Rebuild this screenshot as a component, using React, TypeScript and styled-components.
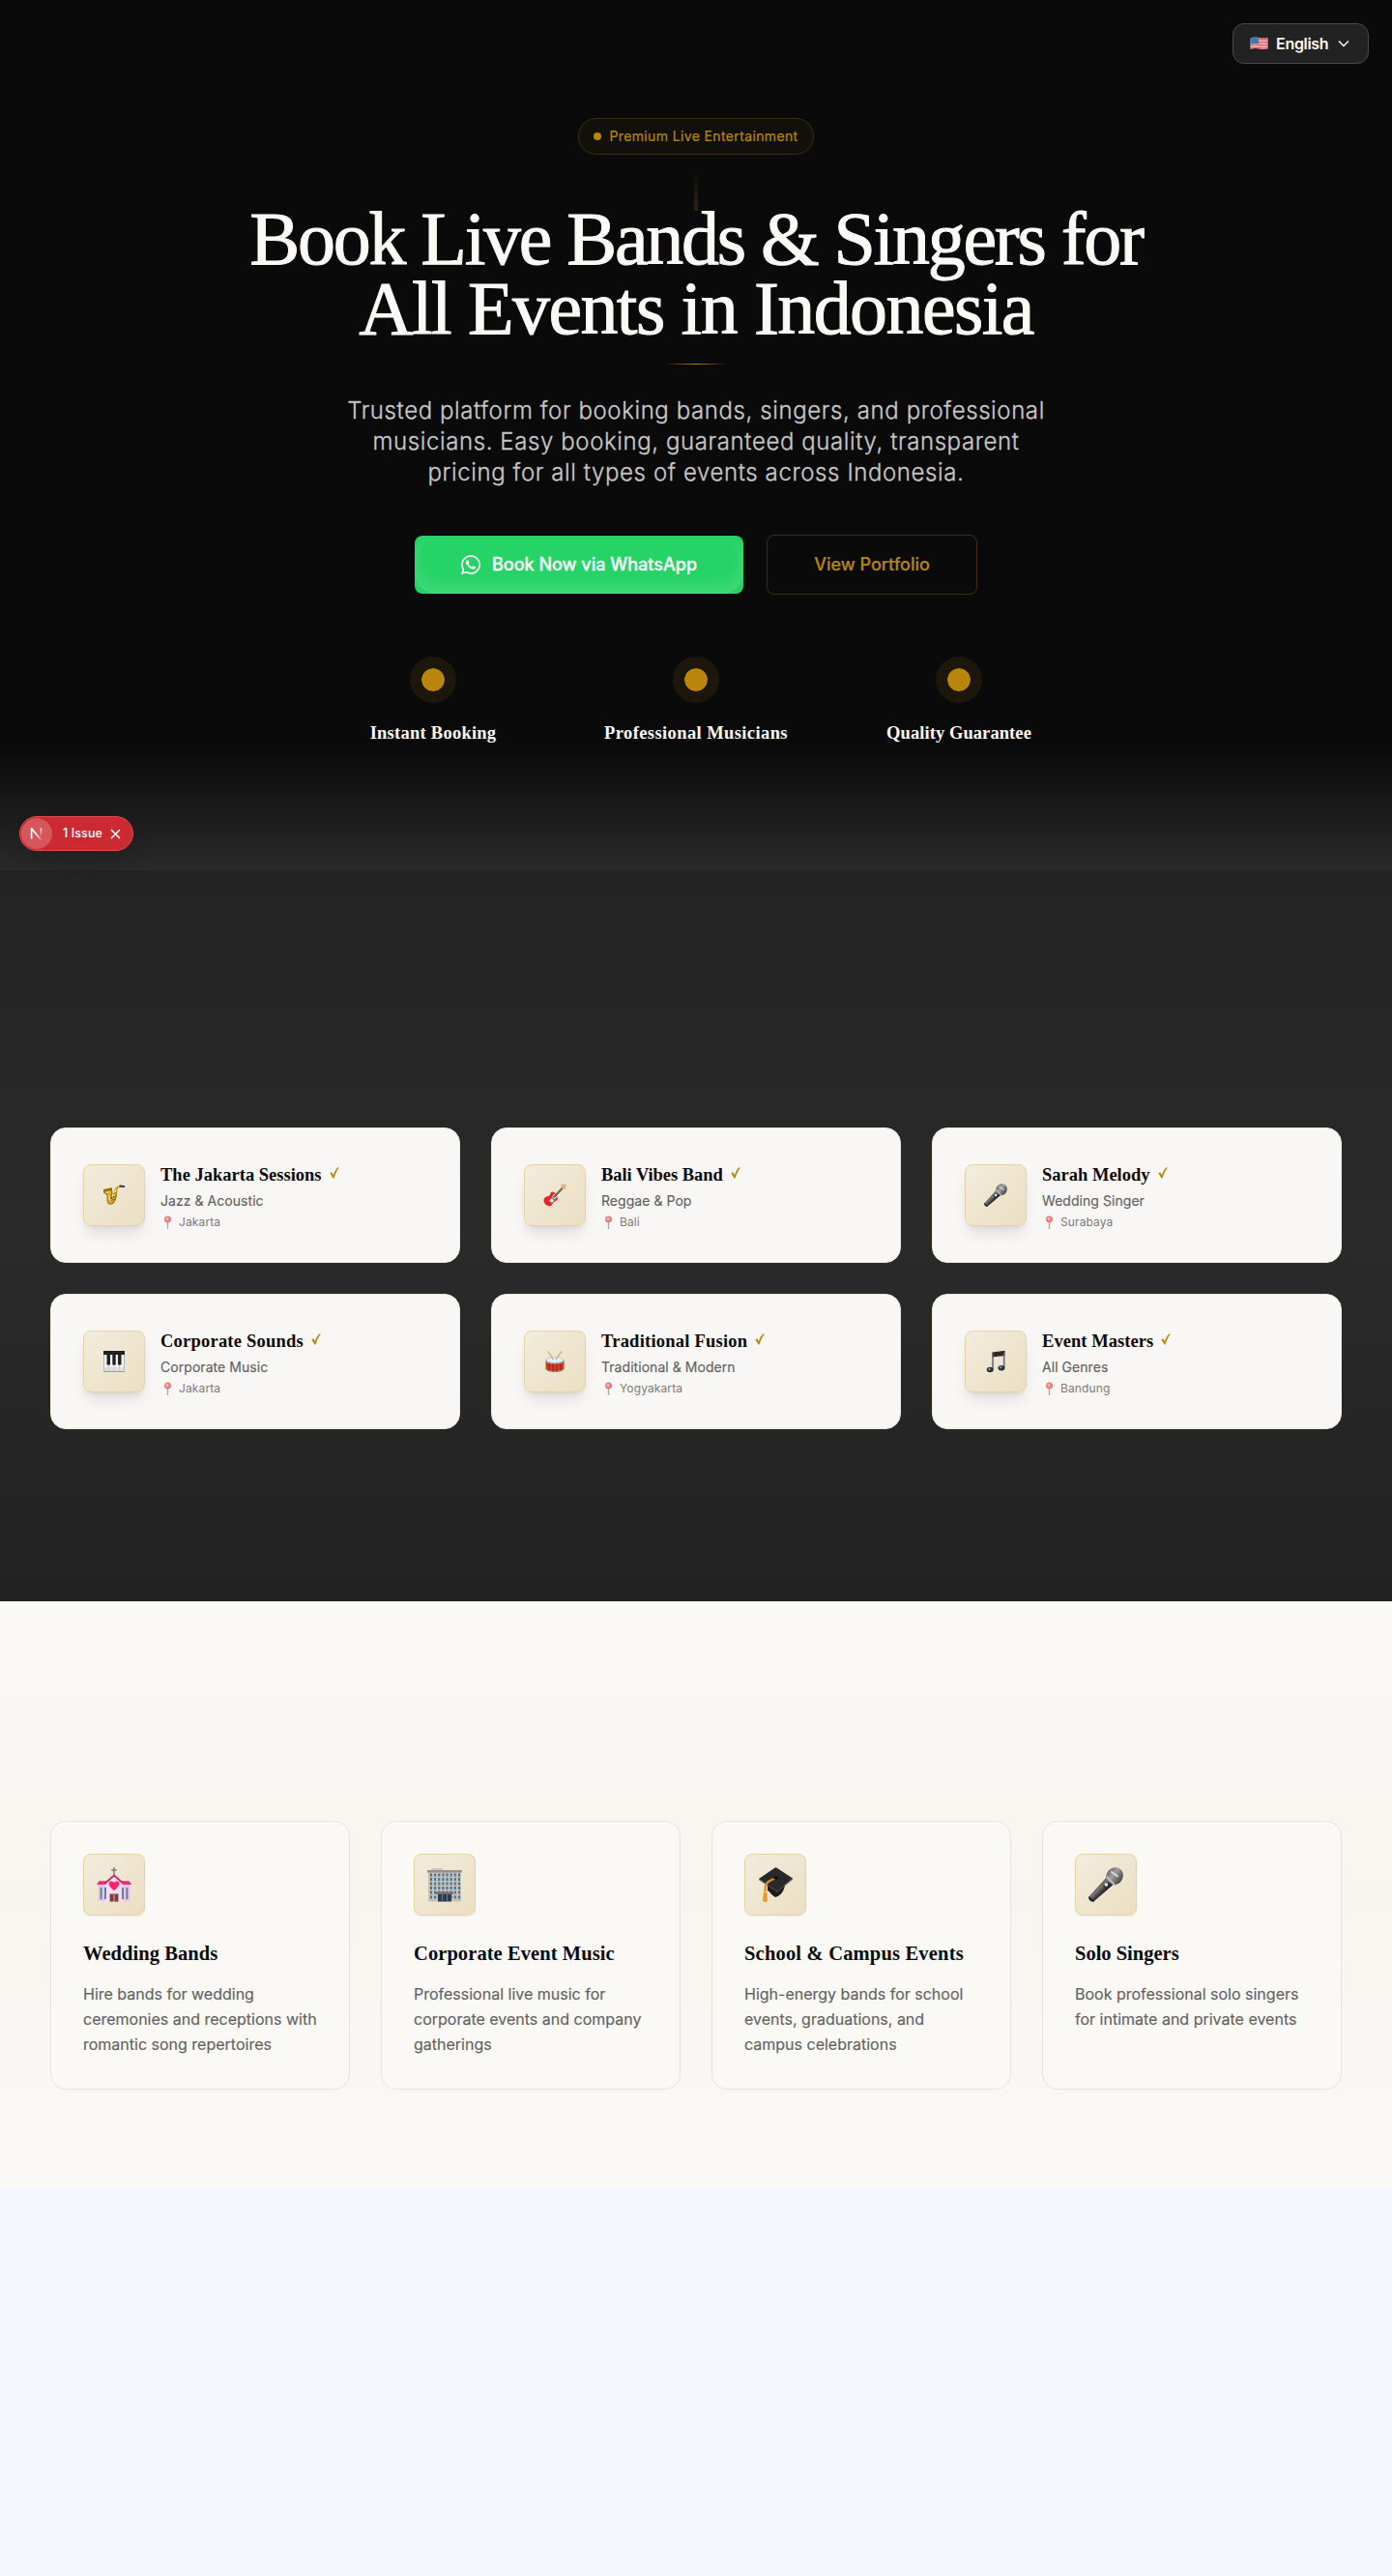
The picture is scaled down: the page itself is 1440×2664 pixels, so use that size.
import React from "react";
import styled, { createGlobalStyle } from "styled-components";

const GOLD = "#b8860b";
const SANS = '"Inter", "Liberation Sans", sans-serif';
const SERIF = '"Liberation Serif", serif';

const GlobalStyle = createGlobalStyle`
  * { box-sizing: border-box; }
  body { margin: 0; background: #f6f6ff; font-family: ${SANS}; }
  h1, h2, h3, p { margin: 0; }
`;

const Page = styled.div`
  position: relative;
  min-height: 2664px;
  background: #f6f6ff;
`;

/* ---------- hero ---------- */

const Hero = styled.header`
  position: relative;
  height: 900px;
  padding-top: 122px;
  background: #0a0a0a;
  display: flex;
  flex-direction: column;
  align-items: center;
  text-align: center;
`;

const HeroFade = styled.div`
  position: absolute;
  left: 0;
  right: 0;
  bottom: 0;
  height: 128px;
  background: linear-gradient(to bottom, rgba(42, 42, 42, 0), #2a2a2a);
`;

const HeroBeam = styled.div`
  position: absolute;
  left: 718px;
  top: 176px;
  width: 4px;
  height: 42px;
  background: linear-gradient(to bottom, rgba(184, 134, 11, 0), rgba(184, 134, 11, 0.22));
`;

const LanguageButton = styled.button`
  position: absolute;
  top: 24px;
  right: 24px;
  width: 141px;
  height: 42px;
  padding: 0 18px;
  display: flex;
  align-items: center;
  border: 1px solid #484848;
  border-radius: 12px;
  background: #222222;
  color: #faf9f6;
  font: 600 16px/24px ${SANS};
  letter-spacing: -0.3px;
  svg:first-child { margin-right: 8px; margin-left: -1px; }
  svg:last-child { margin-left: auto; margin-right: 1px; }
`;

const Pill = styled.div`
  width: 244px;
  height: 38px;
  display: flex;
  align-items: center;
  justify-content: center;
  gap: 8px;
  border: 1px solid rgba(184, 134, 11, 0.25);
  border-radius: 19px;
  background: rgba(184, 134, 11, 0.05);
  color: ${GOLD};
  font: 400 14px/20px ${SANS};
  letter-spacing: 0.37px;
  -webkit-text-stroke: 0.2px ${GOLD};
`;

const PillDot = styled.span`
  width: 8px;
  height: 8px;
  border-radius: 50%;
  background: ${GOLD};
`;

const Headline = styled.h1`
  position: relative;
  margin-top: 51px;
  color: #faf9f6;
  font: 400 78px/72px ${SERIF};
  -webkit-text-stroke: 1px #faf9f6;
`;

const HeadlineLine = styled.span<{ $tracking: number }>`
  display: block;
  white-space: nowrap;
  letter-spacing: ${(p) => p.$tracking}px;
`;

const Rule = styled.div`
  width: 64px;
  height: 1px;
  margin-top: 21px;
  background: linear-gradient(to right, transparent, ${GOLD}, transparent);
`;

const Lead = styled.p`
  margin-top: 32px;
  width: 760px;
  color: #c9c8c5;
  font: 300 24px/32px ${SANS};
  letter-spacing: 0.6px;
  -webkit-text-stroke: 0.3px #c9c8c5;
`;

const Actions = styled.div`
  margin-top: 48px;
  display: flex;
  align-items: center;
  gap: 24px;
`;

const PrimaryButton = styled.button`
  position: relative;
  width: 340px;
  height: 60px;
  display: flex;
  align-items: center;
  justify-content: center;
  gap: 12px;
  border: 0;
  border-radius: 8px;
  background: #25d366;
  color: #ffffff;
  font: 500 18px/28px ${SANS};
  -webkit-text-stroke: 0.3px #ffffff;
  &::after {
    content: "";
    position: absolute;
    inset: 0;
    border-radius: 22px;
    box-shadow: inset 0 -8px 16px rgba(255, 255, 255, 0.15);
  }
`;

const OutlineButton = styled.button`
  width: 218px;
  height: 62px;
  border: 1px solid rgba(184, 134, 11, 0.3);
  border-radius: 8px;
  background: transparent;
  color: ${GOLD};
  font: 500 18px/28px ${SANS};
  -webkit-text-stroke: 0.2px ${GOLD};
`;

const Features = styled.div`
  margin-top: 64px;
  display: grid;
  grid-template-columns: repeat(3, 240px);
  gap: 32px;
`;

const Feature = styled.div`
  position: relative;
  z-index: 1;
  display: flex;
  flex-direction: column;
  align-items: center;
`;

const FeatureDot = styled.div`
  width: 48px;
  height: 48px;
  border: 12px solid #1c160b;
  border-radius: 50%;
  background: ${GOLD};
  background-clip: padding-box;
`;

const FeatureTitle = styled.h3<{ $tracking: number }>`
  margin-top: 16px;
  padding-top: 2px;
  white-space: nowrap;
  color: #faf9f6;
  font: 700 18.5px/26px ${SERIF};
  letter-spacing: ${(p) => p.$tracking}px;
`;

const IssueBadge = styled.div`
  position: absolute;
  left: 20px;
  top: 844px;
  z-index: 2;
  width: 118px;
  height: 36px;
  padding: 0 12px 0 1px;
  display: flex;
  align-items: center;
  border: 1px solid #e5484d;
  border-radius: 18px;
  background: #ca2a30;
  box-shadow: 0 16px 32px -8px rgba(0, 0, 0, 0.24);
  color: #ffffff;
  font: 500 12.5px/16px ${SANS};
  letter-spacing: 0.1px;
  > svg { margin-left: auto; }
`;

const IssueMark = styled.span`
  width: 32px;
  height: 32px;
  margin-right: 11px;
  display: flex;
  align-items: center;
  justify-content: center;
  border-radius: 50%;
  background: #d6565b;
`;

/* ---------- artists ---------- */

const Artists = styled.section`
  height: 756px;
  padding: 266px 52px 0;
  background: linear-gradient(to bottom, #242424, #2a2a2a 50%, #222222);
`;

const ArtistGrid = styled.div`
  display: grid;
  grid-template-columns: repeat(3, 1fr);
  gap: 32px;
`;

const ArtistCard = styled.article`
  height: 140px;
  padding: 0 33px;
  display: flex;
  align-items: center;
  gap: 16px;
  border: 1px solid #efe9dc;
  border-radius: 16px;
  background: #f9f7f5;
`;

const IconTile = styled.div<{ $raised?: boolean }>`
  flex: none;
  width: 64px;
  height: 64px;
  display: flex;
  align-items: center;
  justify-content: center;
  border: 1px solid #e6d3a3;
  border-radius: 8px;
  background: linear-gradient(135deg, #f3ecde, #ebdfc2);
  box-shadow: ${(p) =>
    p.$raised
      ? "0 10px 15px -3px rgba(0,0,0,0.1), 0 4px 6px -4px rgba(0,0,0,0.1)"
      : "0 1px 2px rgba(0,0,0,0.06)"};
`;

const ArtistName = styled.h3<{ $tracking: number }>`
  display: flex;
  align-items: center;
  gap: 8px;
  padding-top: 2px;
  margin-bottom: 4px;
  white-space: nowrap;
  color: #0a0a0a;
  font: 700 18.5px/26px ${SERIF};
  letter-spacing: ${(p) => p.$tracking}px;
  svg { margin-top: -4px; }
`;

const Genre = styled.p`
  color: #636261;
  font: 400 14px/20px ${SANS};
  letter-spacing: 0.05px;
  -webkit-text-stroke: 0.15px #636261;
`;

const Place = styled.p`
  margin-top: 4px;
  padding-left: 3px;
  display: flex;
  align-items: center;
  gap: 7px;
  color: #7b7a79;
  font: 400 12px/16px ${SANS};
  letter-spacing: 0.12px;
`;

/* ---------- services ---------- */

const Services = styled.section`
  height: 606px;
  padding: 227px 52px 0;
  background: linear-gradient(to bottom, #faf9f5, #f8f5f0 50%, #faf9f5);
`;

const ServiceGrid = styled.div`
  display: grid;
  grid-template-columns: repeat(4, 1fr);
  gap: 32px;
`;

const ServiceCard = styled.article`
  height: 278px;
  padding: 33px;
  border: 1px solid #e7e4dc;
  border-radius: 16px;
  background: #faf9f6;
`;

const ServiceTitle = styled.h3<{ $tracking: number }>`
  margin-top: 24px;
  padding-top: 2px;
  white-space: nowrap;
  color: #0a0a0a;
  font: 700 20.5px/26px ${SERIF};
  letter-spacing: ${(p) => p.$tracking}px;
`;

const ServiceText = styled.p`
  margin-top: 16px;
  color: #636261;
  font: 400 16px/26px ${SANS};
  -webkit-text-stroke: 0.15px #636261;
  span { display: block; white-space: nowrap; }
`;

/* ---------- drawings ---------- */

const Flag = () => (
  <svg width="19" height="14" viewBox="0 0 19 14">
    <path d="M0.5 1.5Q5 0 9.5 1T18.500 1V12.200Q14 13.500 9.500 12.500T0.500 12.800Z" fill="#f0b9bd" />
    <path d="M.5 3Q5 1.700 9.500 2.500T18.500 2.500M.5 6Q5 4.700 9.500 5.500T18.500 5.500M.5 9Q5 7.700 9.500 8.500T18.500 8.500M.5 12Q5 10.700 9.500 11.500T18.500 11.500" stroke="#e2606d" strokeWidth="1.300" fill="none" />
    <path d="M.5 1.500Q5 0 9 1V7.300Q5 6.500 .5 7.800Z" fill="#3f78b5" />
  </svg>
);

const Chevron = () => (
  <svg width="12" height="12" viewBox="0 0 12 12" fill="none" stroke="#faf9f6" strokeWidth="1.5">
    <path d="M1 3.500 6 8.500 11 3.500" />
  </svg>
);

const WhatsApp = () => (
  <svg width="20" height="20" viewBox="0 0 24 24" fill="#ffffff">
    <path d="M17.472 14.382c-.297-.149-1.758-.867-2.030-.967-.273-.099-.471-.148-.670.150-.197.297-.767.966-.940 1.164-.173.199-.347.223-.644.075-.297-.150-1.255-.463-2.390-1.475-.883-.788-1.480-1.761-1.653-2.059-.173-.297-.018-.458.130-.606.134-.133.298-.347.446-.520.149-.174.198-.298.298-.497.099-.198.050-.371-.025-.520-.075-.149-.669-1.612-.916-2.207-.242-.579-.487-.500-.669-.510-.173-.008-.371-.010-.570-.010-.198 0-.520.074-.792.372-.272.297-1.040 1.016-1.040 2.479 0 1.462 1.065 2.875 1.213 3.074.149.198 2.096 3.200 5.077 4.487.709.306 1.262.489 1.694.625.712.227 1.360.195 1.871.118.571-.085 1.758-.719 2.006-1.413.248-.694.248-1.289.173-1.413-.074-.124-.272-.198-.570-.347m-5.421 7.403h-.004a9.870 9.870 0 01-5.031-1.378l-.361-.214-3.741.982.998-3.648-.235-.374a9.860 9.860 0 01-1.510-5.260c.001-5.450 4.436-9.884 9.888-9.884 2.640 0 5.122 1.030 6.988 2.898a9.825 9.825 0 012.893 6.994c-.003 5.450-4.437 9.884-9.885 9.884m8.413-18.297A11.815 11.815 0 0012.050 0C5.495 0 .160 5.335.157 11.892c0 2.096.547 4.142 1.588 5.945L.057 24l6.305-1.654a11.882 11.882 0 005.683 1.448h.005c6.554 0 11.890-5.335 11.893-11.893a11.821 11.821 0 00-3.480-8.413Z" />
  </svg>
);

const NextMark = () => (
  <svg width="16" height="16" viewBox="0 0 16 16" fill="none">
    <defs>
      <linearGradient id="nDiag" x1="7" y1="8" x2="13" y2="15" gradientUnits="userSpaceOnUse">
        <stop stopColor="#fff" />
        <stop offset="1" stopColor="#fff" stopOpacity="0.1" />
      </linearGradient>
      <linearGradient id="nStem" x1="0" y1="2" x2="0" y2="11" gradientUnits="userSpaceOnUse">
        <stop stopColor="#fff" />
        <stop offset="1" stopColor="#fff" stopOpacity="0" />
      </linearGradient>
    </defs>
    <path d="M2.600 13.500V2.500" stroke="#fff" strokeWidth="1.600" />
    <path d="M2.300 2.500 12.800 15" stroke="url(#nDiag)" strokeWidth="1.700" />
    <rect x="11.600" y="2.500" width="1.600" height="8.500" fill="url(#nStem)" />
  </svg>
);

const CloseMark = () => (
  <svg width="11" height="11" viewBox="0 0 11 11" stroke="#fff" strokeWidth="1.500">
    <path d="M1 1 10 10M10 1 1 10" />
  </svg>
);

const Check = () => (
  <svg width="10" height="12" viewBox="0 0 10 12">
    <path d="M.3 6.300 2.300 5.200 3.900 8.200C5 4.600 6.900 1.300 8.600.3L9.800.4C7.600 3.300 5.700 7.300 4.500 11.600H3.500Z" fill={GOLD} />
  </svg>
);

const Pin = () => (
  <svg width="9" height="15" viewBox="0 0 9 15">
    <path d="M4.500 7V14" stroke="#aaa6a6" strokeWidth="1.300" />
    <circle cx="4.500" cy="4" r="3.500" fill="#e57f80" />
    <circle cx="4" cy="3.500" r="1.500" fill="#f6b8b8" />
  </svg>
);

const Sax = () => (
  <svg width="24" height="24" viewBox="0 0 24 24" fill="none">
    <path d="M16.200 3.500C14.800 5 15.600 9 14.700 13 13.800 17.500 12 21.600 8.500 21.600 4.800 21.600 4.300 18 4.800 14.500L4.300 11.500 1.200 9.500 1 6.200 9.800 4.300 10.500 9.800 9.300 14 10.800 14.500C12 11.500 12.200 6.500 13.800 4Z" fill="#7a560c" />
    <path d="M16.800 3.200C14.600 4.500 15.200 9 14 13 12.800 17.500 11.500 20.800 8.500 20.800 5.600 20.800 5.200 18 5.600 14.500L5 11 1.500 8.500 9.300 6.500 9.500 10 8.300 14.500 9.200 16.500C11.500 14 11.700 6 14.200 3.800Z" fill="#dba91f" />
    <ellipse cx="5.400" cy="6.600" rx="4.500" ry="1.500" transform="rotate(-12 5.400 6.600)" fill="#94700f" />
    <path d="M13.800 6.500 12.200 13M6.800 12 7 17.500M3.500 9.200 7.500 8.500" stroke="#ffe67d" strokeWidth="1.100" />
    <path d="M14.500 9 11.500 11M13.800 12.500 10.500 14.500M12.800 16 9.500 17.500" stroke="#6d4c0a" strokeWidth=".9" />
    <path d="M15.300 4 18.500 2.600" stroke="#caa02a" strokeWidth="1.700" />
    <path d="M17.600 1.600 23 2.300V3.900L17.600 3.800Z" fill="#30343a" />
  </svg>
);

const Guitar = () => (
  <svg width="24" height="24" viewBox="0 0 24 24" fill="none">
    <path d="M11.500 9C8.800 7.500 7.600 9 7 11.500 6 13.500 2 13 .7 16 -.3 19.500 3 23.500 7 23.300 9.300 23 9.500 19.500 11.500 18.500 14 17.800 15.300 16.500 14.700 14.500Z" fill="#ec2026" />
    <path d="M11 10.500 8.500 15 5.500 18 8.500 20.500 11.500 16.500 14 14Z" fill="#eceff2" />
    <path d="M6 17.500 9 20.500M8.500 14.500 12 17.500" stroke="#777" strokeWidth="1.200" />
    <path d="M10.500 14.500 20 4.500" stroke="#5b4741" strokeWidth="2" />
    <path d="M10.500 14.500 20 4.500" stroke="#b8b5b1" strokeWidth=".5" />
    <path d="M18.300 3.600 21.200 .5 24 1.200 22.500 4.500 20.200 5.500Z" fill="#eaad79" />
    <path d="M18.500 2 20 .7M22 5.500 23.500 4" stroke="#9b806b" strokeWidth=".8" />
  </svg>
);

const Mic = ({ size }: { size: number }) => (
  <svg width={size} height={size} viewBox="0 0 24 24" fill="none">
    <defs>
      <linearGradient id="micBody" x1="7" y1="11" x2="12" y2="16" gradientUnits="userSpaceOnUse">
        <stop stopColor="#444" />
        <stop offset=".4" stopColor="#777" />
        <stop offset="1" stopColor="#1c1c1c" />
      </linearGradient>
      <linearGradient id="micHead" x1="14" y1="2" x2="23" y2="9" gradientUnits="userSpaceOnUse">
        <stop stopColor="#6c6c6c" />
        <stop offset=".4" stopColor="#a0a0a0" />
        <stop offset="1" stopColor="#444" />
      </linearGradient>
    </defs>
    <path d="M12 7.500 16.800 12.200 4 23.300Q2.500 24.300 1 22.800T.600 20Z" fill="url(#micBody)" />
    <path d="M.5 20 4 23.500Q2.500 24.300 1 22.800T.5 20Z" fill="#222" />
    <path d="M12 7.500C12 3 15.500 0 19 .2 22.500.500 24.300 3.500 23.800 6.500 23 10.500 20 12.500 16.500 12.200Z" fill="url(#micHead)" />
    <path d="M12.800 6.700 18 12" stroke="#c5c5c5" strokeWidth="1" />
    <path d="M15.500 3 20.500 6.500" stroke="#d7d7d7" strokeWidth="1.200" />
    <path d="M10 12.500 12.500 10.300 14 12 11.500 14.500Z" fill="#303030" />
    <circle cx="12.200" cy="12" r="1.200" fill="#eee" />
  </svg>
);

const Piano = () => (
  <svg width="22" height="22" viewBox="0 0 22 22">
    <rect width="22" height="22" rx=".6" fill="#9b9b9b" />
    <path d="M.7 3H5.200V21H.700ZM5.800 3H10.700V21H5.800ZM11.300 3H16.200V21H11.300ZM16.800 3H21.300V21H16.800Z" fill="#f3f3f3" />
    <path d="M.7 17H21.300V21H.700Z" fill="#d4d4d4" opacity=".7" />
    <path d="M0 0H22V4H0ZM3.500 3H7V14.500H3.500ZM9.300 3H12.700V14.500H9.300ZM15 3H18.500V14.500H15Z" fill="#222" />
  </svg>
);

const Drum = () => (
  <svg width="22" height="24" viewBox="0 0 22 24" fill="none">
    <path d="M1.500 11V19.500C3 23.800 19 23.800 20.500 19.500V11Z" fill="#d73a22" />
    <path d="M1.500 18.800C4 22.800 18 22.800 20.500 18.800V20C18 24 4 24 1.500 20Z" fill="#969596" />
    <path d="M5 12V21.500M9 13V22.500M13 13V22.500M17 12V21.500" stroke="#8b241d" strokeWidth="1" />
    <ellipse cx="11" cy="11" rx="9.800" ry="3.500" fill="#a8bbc5" />
    <ellipse cx="11" cy="10.600" rx="8.400" ry="2.500" fill="#e5f4fa" />
    <path d="M3.800 1.500 9.500 10.200M18.200 1.500 11.800 10.200" stroke="#cdb07a" strokeWidth="1.300" />
  </svg>
);

const Notes = () => (
  <svg width="20" height="24" viewBox="0 0 20 24" fill="none">
    <path d="M6.400 2.500 19.500 .7V6L6.400 7.400Z" fill="#33272a" />
    <path d="M7 4V20M18.700 3V18" stroke="#606770" strokeWidth="1.500" />
    <ellipse cx="4.200" cy="20.500" rx="3.500" ry="2.700" fill="#28313b" />
    <ellipse cx="16" cy="18.700" rx="3.500" ry="2.700" fill="#28313b" />
    <circle cx="3.500" cy="20" r="1.200" fill="#8493a1" />
    <circle cx="15.300" cy="18" r="1.200" fill="#8493a1" />
  </svg>
);

const Church = () => (
  <svg width="36" height="36" viewBox="0 0 36 36" fill="none">
    <path d="M1.500 17H34.500V35H1.500Z" fill="#ecc3ea" />
    <path d="M0 18 2.500 14.300H33.500L36 18Z" fill="#e0317c" />
    <path d="M9.200 16.500 18 9 26.800 16.500V35.300H9.200Z" fill="#f8dcf5" />
    <path d="M8.300 17 18 8.500 27.700 17" stroke="#c9286c" strokeWidth="1.800" />
    <path d="M18 0V8.500M15.300 3H20.700" stroke="#907070" strokeWidth="1.400" />
    <path d="M18 24C10.500 18.500 12 14 15.500 14.500Q17.500 14.800 18 16.300 18.500 14.800 20.500 14.500C24 14 25.500 18.500 18 24Z" fill="#fc236c" />
    <path d="M13 27H23V35.500H13Z" fill="#c89996" />
    <path d="M14 28H17.400V35.500H14ZM18.600 28H22V35.500H18.600Z" fill="#7b3e3b" />
    <path d="M3.600 21H5.600V33H3.600ZM30.400 21H32.400V33H30.400ZM26 21H28V33H26ZM8 21H10V33H8Z" fill="#5e8299" />
  </svg>
);

const Building = () => (
  <svg width="36" height="36" viewBox="0 0 36 36" fill="none">
    <path d="M4.500 1H16V4H4.500Z" fill="#c7c7c8" />
    <path d="M1 4H35V35.500H1Z" fill="#c6c0b9" />
    <path d="M0 3H36V5.500H0Z" fill="#98918c" />
    {[8, 12.5, 17, 21.5, 26, 31].map((y) => (
      <path key={y} d={`M3 ${y}H34`} stroke="#3f7493" strokeWidth="3" strokeDasharray="2 2.140" />
    ))}
    <path d="M9 25.500H27V28H9Z" fill="#756e69" />
    <path d="M11 28H25V35.500H11Z" fill="#283f50" />
    <path d="M15.500 28V35.500M20.500 28V35.500" stroke="#8494a0" strokeWidth=".7" />
  </svg>
);

const GraduationCap = () => (
  <svg width="36" height="36" viewBox="0 0 36 36" fill="none">
    <path d="M10 15V24C13 26 15 30 18.500 31 23 29 26 27 28 19Z" fill="#1b1b1b" />
    <path d="M1 12 18.500 0 36 11.500 20 24.500Z" fill="#292929" />
    <path d="M1 12 20 24.500 36 11.500V12.500L20 26 1 13Z" fill="#4a4a4a" />
    <path d="M18 11.500C11 14 7.500 16 7.500 23.500" stroke="#d6942c" strokeWidth="2.200" />
    <ellipse cx="18.500" cy="11" rx="2.500" ry="1.800" fill="#111" />
    <path d="M6.200 23H9L10 35Q7.500 37 5 35Z" fill="#e99a25" />
    <path d="M6 25.500H9.300" stroke="#f8d06f" strokeWidth="1" />
  </svg>
);

/* ---------- content ---------- */

const features = [
  { title: "Instant Booking", tracking: 0.25 },
  { title: "Professional Musicians", tracking: 0.4 },
  { title: "Quality Guarantee", tracking: 0.08 },
];

const artists = [
  { name: "The Jakarta Sessions", genre: "Jazz & Acoustic", place: "Jakarta", icon: <Sax />, tracking: 0 },
  { name: "Bali Vibes Band", genre: "Reggae & Pop", place: "Bali", icon: <Guitar />, tracking: -0.05 },
  { name: "Sarah Melody", genre: "Wedding Singer", place: "Surabaya", icon: <Mic size={24} />, tracking: 0 },
  { name: "Corporate Sounds", genre: "Corporate Music", place: "Jakarta", icon: <Piano />, tracking: 0.22 },
  { name: "Traditional Fusion", genre: "Traditional & Modern", place: "Yogyakarta", icon: <Drum />, tracking: 0.23 },
  { name: "Event Masters", genre: "All Genres", place: "Bandung", icon: <Notes />, tracking: 0.06 },
];

const services = [
  { title: "Wedding Bands", lines: ["Hire bands for wedding", "ceremonies and receptions with", "romantic song repertoires"], icon: <Church />, tracking: 0.06 },
  { title: "Corporate Event Music", lines: ["Professional live music for", "corporate events and company", "gatherings"], icon: <Building />, tracking: 0.08 },
  { title: "School & Campus Events", lines: ["High-energy bands for school", "events, graduations, and", "campus celebrations"], icon: <GraduationCap />, tracking: 0.19 },
  { title: "Solo Singers", lines: ["Book professional solo singers", "for intimate and private events"], icon: <Mic size={36} />, tracking: 0 },
];

export default function App() {
  return (
    <Page>
      <GlobalStyle />
      <Hero>
        <HeroFade />
        <HeroBeam />
        <LanguageButton>
          <Flag />
          English
          <Chevron />
        </LanguageButton>
        <Pill>
          <PillDot />
          Premium Live Entertainment
        </Pill>
        <Headline>
          <HeadlineLine $tracking={-2.3}>Book Live Bands &amp; Singers for</HeadlineLine>
          <HeadlineLine $tracking={-1.6}>All Events in Indonesia</HeadlineLine>
        </Headline>
        <Rule />
        <Lead>
          Trusted platform for booking bands, singers, and professional
          <br />
          musicians. Easy booking, guaranteed quality, transparent
          <br />
          pricing for all types of events across Indonesia.
        </Lead>
        <Actions>
          <PrimaryButton>
            <WhatsApp />
            Book Now via WhatsApp
          </PrimaryButton>
          <OutlineButton>View Portfolio</OutlineButton>
        </Actions>
        <Features>
          {features.map((f) => (
            <Feature key={f.title}>
              <FeatureDot />
              <FeatureTitle $tracking={f.tracking}>{f.title}</FeatureTitle>
            </Feature>
          ))}
        </Features>
        <IssueBadge>
          <IssueMark>
            <NextMark />
          </IssueMark>
          1 Issue
          <CloseMark />
        </IssueBadge>
      </Hero>
      <Artists>
        <ArtistGrid>
          {artists.map((a) => (
            <ArtistCard key={a.name}>
              <IconTile $raised>{a.icon}</IconTile>
              <div>
                <ArtistName $tracking={a.tracking}>
                  {a.name}
                  <Check />
                </ArtistName>
                <Genre>{a.genre}</Genre>
                <Place>
                  <Pin />
                  {a.place}
                </Place>
              </div>
            </ArtistCard>
          ))}
        </ArtistGrid>
      </Artists>
      <Services>
        <ServiceGrid>
          {services.map((s) => (
            <ServiceCard key={s.title}>
              <IconTile>{s.icon}</IconTile>
              <ServiceTitle $tracking={s.tracking}>{s.title}</ServiceTitle>
              <ServiceText>
                {s.lines.map((line) => (
                  <span key={line}>{line}</span>
                ))}
              </ServiceText>
            </ServiceCard>
          ))}
        </ServiceGrid>
      </Services>
    </Page>
  );
}
